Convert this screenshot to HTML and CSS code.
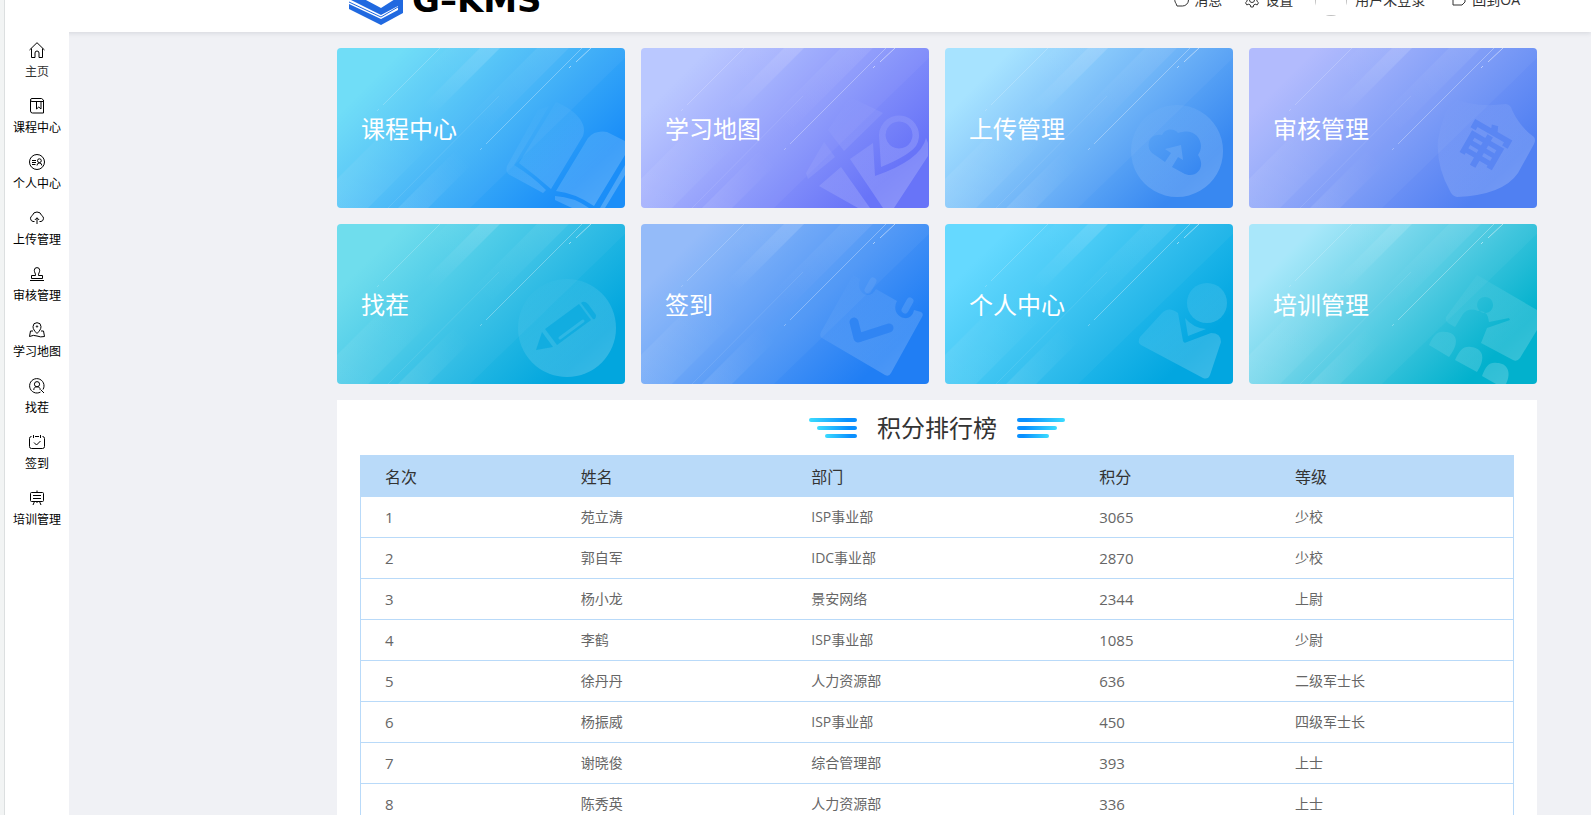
FILE: index.html
```html
<!DOCTYPE html>
<html lang="zh-CN">
<head>
<meta charset="utf-8">
<title>G-KMS</title>
<link rel="stylesheet" href="styles.css">
</head>
<body>
<svg class="defs" width="0" height="0" aria-hidden="true">
  <defs>
    <linearGradient id="up" gradientUnits="userSpaceOnUse" x1="163" y1="0" x2="95" y2="68"><stop offset="0" stop-color="#fff" stop-opacity=".15"/><stop offset="1" stop-color="#fff" stop-opacity="0"/></linearGradient>
    <linearGradient id="up2" gradientUnits="userSpaceOnUse" x1="220" y1="0" x2="140" y2="80"><stop offset="0" stop-color="#fff" stop-opacity=".07"/><stop offset="1" stop-color="#fff" stop-opacity="0"/></linearGradient>
    <linearGradient id="down" gradientUnits="userSpaceOnUse" x1="60" y1="160" x2="120" y2="100"><stop offset="0" stop-color="#fff" stop-opacity=".1"/><stop offset="1" stop-color="#fff" stop-opacity="0"/></linearGradient>
    <linearGradient id="edge" gradientUnits="userSpaceOnUse" x1="0" y1="150" x2="80" y2="70"><stop offset="0" stop-color="#fff" stop-opacity=".08"/><stop offset="1" stop-color="#fff" stop-opacity="0"/></linearGradient>
    <linearGradient id="mark" gradientUnits="userSpaceOnUse" x1="195" y1="60" x2="265" y2="150"><stop offset="0" stop-color="#fff" stop-opacity="0"/><stop offset=".5" stop-color="#fff" stop-opacity=".12"/><stop offset="1" stop-color="#fff" stop-opacity=".21"/></linearGradient>
    <symbol id="rays" viewBox="0 0 288 160">
      <path fill="url(#up)" d="M143 0h20L63 100H43z"/>
      <path fill="url(#up2)" d="M110 0h33L43 100H10zM200 0h32L92 140H60z"/>
      <path fill="url(#edge)" d="M0 131L100 31l31 29L31 160H0z"/>
      <path fill="url(#down)" d="M61 160L161 60h30L91 160zM75 160L175 60h16L91 160z"/>
      <path fill="#fff" fill-opacity=".04" d="M0 0h288v10L133 160H0z"/>
      <g fill="none" stroke="#fff">
        <path stroke-opacity=".2" d="M46 57L103 0M40 63l2-2"/>
        <path stroke-opacity=".1" d="M51 160L162 48"/>
        <path stroke-opacity=".3" d="M149 96L245 0M143 102l2-2"/>
        <path stroke-opacity=".5" d="M239 14L254 0M232 20l2-2"/>
      </g>
    </symbol>
  </defs>
</svg>
<div class="page">
  <header class="header">
    <div class="wrap header-inner">
      <a class="logo" href="#">
        <svg width="56" height="50" viewBox="0 8 56 50" fill="none" aria-hidden="true">
          <path fill="#2069e0" d="M28 2l26 15-26 15L2 17z"/>
          <path fill="#2069e0" d="M1 24l32 17 22-14v19L33 58 1 42v-5l32 15 17-9v-4L33 48 1 32z"/>
          <path stroke="#2069e0" d="M1 35l32 15 17-10M1 29l32 16 18-11"/>
        </svg>
        <span>G–KMS</span>
      </a>
      <nav class="tools">
        <a href="#"><svg width="16" height="16" viewBox="0 0 16 16" aria-hidden="true"><path d="M6.500 2h3a6 6 0 0 1 0 12H4l-1-2.500A6 6 0 0 1 6.500 2z"/></svg>消息</a>
        <a href="#"><svg width="16" height="16" viewBox="0 0 16 16" aria-hidden="true"><circle cx="8" cy="8" r="2.5"/><path d="M6.8 1h2.4l.5 2 1.5.8 2-.7 1.3 2.2-1.6 1.5v2.4l1.6 1.5-1.3 2.2-2-.7-1.5.8-.5 2H6.8l-.5-2-1.5-.8-2 .7-1.3-2.2 1.6-1.5V6.8L1.500 5.300l1.300-2.200 2 .7L6.300 3z"/></svg>设置</a>
        <a class="user" href="#"><span class="avatar"><span></span></span>用户未登录</a>
        <a href="#"><svg width="16" height="16" viewBox="0 0 16 16" aria-hidden="true"><path d="M7 3H2v10h9l3-3V8M9 2h5v5M14 2L8 8"/></svg>回到OA</a>
      </nav>
    </div>
  </header>
  <div class="body">
    <nav class="side">
      <a class="home" href="#"><svg viewBox="0 0 16 16" aria-hidden="true"><path d="M.5 8L8 .7 15.500 8M2.500 6.500v9h3.500v-4.500a2 2 0 0 1 4 0v4.500h3.500v-9"/></svg>主页</a>
      <a href="#"><svg viewBox="0 0 16 16" aria-hidden="true"><path d="M1.500 2.500v10.500a2 2 0 0 0 2 2h11v-11.500h-11.500a1.500 1.500 0 0 1 0-3h9.500l2 1.500v2M7.500 3.500V11L9.800 9l2.200 2V3.500"/></svg>课程中心</a>
      <a href="#"><svg viewBox="0 0 16 16" aria-hidden="true"><circle cx="8" cy="8" r="7.500"/><path d="M3 6.500h4M3 8.500h4M3 10.500h3.500M8 11.500q0-2.500 2.400-2.500t2.400 2.500"/><circle cx="10.400" cy="6.700" r="1.900"/></svg>个人中心</a>
      <a href="#"><svg viewBox="0 0 16 16" aria-hidden="true"><path d="M5.500 11.500H4A3.200 3.200 0 0 1 3.300 5.500 4.900 4.900 0 0 1 12.700 5.500 3.200 3.200 0 0 1 12 11.500h-1.500M8 14V7.800M5.800 10L8 7.800 10.200 10"/></svg>上传管理</a>
      <a href="#"><svg viewBox="0 0 16 16" aria-hidden="true"><path d="M6.500 9.500c.3-2-1.200-3-1.200-5.200a2.700 2.700 0 0 1 5.400 0c0 2.200-1.500 3.200-1.200 5.200h4v3h-11v-3zM1 14.500h14"/></svg>审核管理</a>
      <a href="#"><svg viewBox="0 0 16 16" aria-hidden="true"><path d="M8 11.500C5.500 9 4 7 4 4.700a4 4 0 0 1 8 0C12 7 10.500 9 8 11.500zM4 9H1.500L.5 14.500q4-2 7.500-.5t7.500.5L14.500 9H12"/><circle cx="8" cy="4.500" r=".7"/></svg>学习地图</a>
      <a href="#"><svg viewBox="0 0 16 16" aria-hidden="true"><path d="M11.500 14A7.200 7.200 0 1 1 14 11.500M12 12l3 3M4.800 12c0-2.300 1.200-3.200 3.200-3.200s3.200.9 3.200 3.200"/><circle cx="8" cy="6.200" r="2.600"/></svg>找茬</a>
      <a href="#"><svg viewBox="0 0 16 16" aria-hidden="true"><path d="M2.500 2.500q-2 0-2 2v8q0 2 2 2h11q2 0 2-2v-8q0-2-2-2M6 2.500h4M4.500 1v3M11.500 1v3M5 8.500l2.500 2.500L11.500 7"/></svg>签到</a>
      <a href="#"><svg viewBox="0 0 16 16" aria-hidden="true"><path d="M2.500 2.500h11q1 0 1 1v7q0 1-1 1h-11q-1 0-1-1v-7q0-1 1-1zM8 .5v2M4 5.500h8M4 8.500h8M5.500 11.500L4 15M10.500 11.500l1.500 3.500M8 11.500v1.500"/></svg>培训管理</a>
    </nav>
    <main class="main">
      <div class="wrap">
        <section class="cards">
          <a class="card course" href="#"><svg viewBox="0 0 288 160" aria-hidden="true"><use href="#rays"/><g fill="url(#mark)"><path d="M219 54C238 62 251 75 246 88L214 141Q198 127 182 115z"/><path d="M201 62L170 118Q168 125 173 127L206 145 209 142Q195 128 177 117L212 58z"/><path d="M251 90Q258 82 270 84L288 93V107L257 158Q238 145 219 143zM218 148Q237 149 252 160H235L218 152zM288 117L263 160h5L288 127z"/></g></svg><span>课程中心</span></a>
          <a class="card map" href="#"><svg viewBox="0 0 288 160" aria-hidden="true"><use href="#rays"/><g fill="url(#mark)"><path d="M209 49L242 65 203 103 187 82zM183 94L194 109 167 131 165 125zM200 119L229 160H217L178 138zM232 95L234 128Q280 112 285 90L287 95V108L253 160H242L209 111z"/><path fill-rule="evenodd" d="M240 119L238 87A20 20 0 1 1 275 98Q267 108 240 119zM258 73.500a13.500 13.500 0 1 0 .1 0z"/></g></svg><span>学习地图</span></a>
          <a class="card upload" href="#"><svg viewBox="0 0 288 160" aria-hidden="true"><use href="#rays"/><path fill="url(#mark)" fill-rule="evenodd" d="M232 57a46 46 0 1 0 .1 0zM220 114L207 105C200 98 204 85 217 87 220 80 230 80 233 85 252 78 261 96 253 107 262 120 250 132 238 125L227 119 233 109 238 112 236 97 220 101 226 105z"/></svg><span>上传管理</span></a>
          <a class="card review" href="#"><svg viewBox="0 0 288 160" aria-hidden="true"><use href="#rays"/><path fill="url(#mark)" d="M204 50Q225 60 257 56 262 57 263 62 271 79 285 89 287 92 285 96L269 125Q254 147 208 149 203 148 201 143 187 118 189 92 193 68 204 50z"/><text class="seal" x="235" y="117" text-anchor="middle" transform="rotate(30 235 99)">审</text></svg><span>审核管理</span></a>
          <a class="card find" href="#"><svg viewBox="0 0 288 160" aria-hidden="true"><use href="#rays"/><circle cx="230" cy="104" r="49" fill="url(#mark)"/><path fill="#0aa9df" fill-opacity=".75" d="M199 126L205 108 216 123zM208 105L242 80 254 96 220 121zM244 79Q247 76 251 80L259 91Q259 96 256 95z"/><path stroke="#2eb7e4" stroke-width="3" stroke-linecap="round" d="M223 114L246 97"/></svg><span>找茬</span></a>
          <a class="card sign" href="#"><svg viewBox="0 0 288 160" aria-hidden="true"><use href="#rays"/><path fill="url(#mark)" d="M212 51L219 55C214 68 228 78 235 65L256 77C248 92 270 102 273 86L280 88Q283 90 281 93L250 149Q248 153 244 151L181 114Q178 112 180 108z"/><g fill="none" stroke-linecap="round"><path stroke="#fff" stroke-opacity=".07" stroke-width="7" d="M232 57L227 66"/><path stroke="#fff" stroke-opacity=".12" stroke-width="7" d="M269 77L264 86"/><path stroke="#2d83f3" stroke-opacity=".9" stroke-width="9" stroke-linejoin="round" d="M213 98L217 114 248 104"/></g></svg><span>签到</span></a>
          <a class="card person" href="#"><svg viewBox="0 0 288 160" aria-hidden="true"><use href="#rays"/><g fill="url(#mark)"><circle cx="262" cy="79" r="20"/><path d="M217 89Q224 82 233 89L238 117Q239 120 242 118L266 109Q276 109 276 118L265 151Q263 156 258 154L196 121Q192 118 195 113zM240 94Q248 104 261 105L243 112z"/></g></svg><span>个人中心</span></a>
          <a class="card train" href="#"><svg viewBox="0 0 288 160" aria-hidden="true"><use href="#rays"/><g fill="url(#mark)"><path fill-rule="evenodd" d="M228 51L288 86V106L271 134Q268 138 264 136L232 119 238 104 261 96 260 94 240 98Q239 86 229 87 220 83 214 90L206 103 199 99Q196 97 197 93zM236 73a8 8 0 1 0 .1 0z"/><path d="M180 121L200 133C212 118 207 108 196 108 188 107 185 111 180 121z"/><path d="M206 136L228 148C238 133 233 124 222 123 214 122 211 126 206 136z"/><path d="M233 152L247 160H257C263 148 258 139 248 139 240 138 237 142 233 152z"/></g></svg><span>培训管理</span></a>
        </section>
        <section class="panel">
          <div class="title">
            <div class="bars left"><i></i><i></i><i></i></div>
            <h2>积分排行榜</h2>
            <div class="bars right"><i></i><i></i><i></i></div>
          </div>
          <table class="rank">
            <colgroup><col class="w17"><col class="w20"><col class="w25"><col class="w17"><col class="w21"></colgroup>
            <thead><tr><th>名次</th><th>姓名</th><th>部门</th><th>积分</th><th>等级</th></tr></thead>
            <tbody>
              <tr><td class="num">1</td><td>苑立涛</td><td>ISP事业部</td><td class="num">3065</td><td>少校</td></tr>
              <tr><td class="num">2</td><td>郭自军</td><td>IDC事业部</td><td class="num">2870</td><td>少校</td></tr>
              <tr><td class="num">3</td><td>杨小龙</td><td>景安网络</td><td class="num">2344</td><td>上尉</td></tr>
              <tr><td class="num">4</td><td>李鹤</td><td>ISP事业部</td><td class="num">1085</td><td>少尉</td></tr>
              <tr><td class="num">5</td><td>徐丹丹</td><td>人力资源部</td><td class="num">636</td><td>二级军士长</td></tr>
              <tr><td class="num">6</td><td>杨振威</td><td>ISP事业部</td><td class="num">450</td><td>四级军士长</td></tr>
              <tr><td class="num">7</td><td>谢晓俊</td><td>综合管理部</td><td class="num">393</td><td>上士</td></tr>
              <tr><td class="num">8</td><td>陈秀英</td><td>人力资源部</td><td class="num">336</td><td>上士</td></tr>
            </tbody>
          </table>
        </section>
      </div>
    </main>
  </div>
</div>
</body>
</html>
```

FILE: styles.css
```css
* { box-sizing: border-box; }
body {
  margin: 0;
  font-family: "Open Sans", "Noto Sans CJK SC", sans-serif;
  font-size: 14px;
  color: #333;
  background: #f0f1f5;
}
a { color: inherit; text-decoration: none; }
.defs { position: absolute; }
.page {
  display: flex;
  flex-direction: column;
  height: 100vh;
  overflow: hidden;
  border-left: 4px solid #f2f4f4;
}
.wrap {
  width: 100%;
  max-width: 1200px;
  margin: 0 54px 0 auto;
}
/* The bar is scrolled halfway out of view. */
.header {
  flex: none;
  height: 64px;
  margin-top: -32px;
  border-left: 1px solid #dcdfe0;
  background: #fff;
  box-shadow: 0 1px 5px rgba(0, 21, 41, .12);
}
.header-inner {
  display: flex;
  align-items: center;
  justify-content: space-between;
  height: 64px;
  padding: 0 17px 0 11px;
}
.logo {
  display: flex;
  align-items: center;
  gap: 8px;
  color: #000;
  font: bold 34px/64px "DejaVu Sans", sans-serif;
}
.tools { display: flex; align-items: center; gap: 22px; line-height: 32px; }
.tools a { display: flex; align-items: center; gap: 5px; }
.tools svg, .side svg { fill: none; stroke: currentColor; }
.tools .user { gap: 8px; margin-right: 4px; }
.avatar { width: 32px; height: 32px; border-radius: 50%; overflow: hidden; }
.avatar span { display: block; height: 32px; border: 1px solid #c0c0c0; }

.body { display: flex; flex: 1; min-height: 0; }
.side {
  position: relative;
  display: flex;
  flex-direction: column;
  flex: none;
  width: 65px;
  border-left: 1px solid #dcdfe0;
  background: #fff;
  color: #000;
  font-size: 12px;
  line-height: 16px;
}
.side a {
  display: flex;
  flex-direction: column;
  align-items: center;
  gap: 6px;
  height: 56px;
  padding-top: 10px;
}
.side svg { width: 16px; height: 16px; }
.side .home { color: #333; }
.side .home svg { color: #000; }
.main { flex: 1; padding-top: 16px; }

.cards {
  display: grid;
  grid-template-columns: repeat(4, 1fr);
  gap: 16px;
}
.card {
  display: grid;
  align-items: center;
  height: 160px;
  border-radius: 4px;
  overflow: hidden;
  color: #fff;
  font-size: 24px;
  line-height: 32px;
  background: linear-gradient(135deg, var(--from) 15%, var(--to) 84%);
}
.card svg, .card span { grid-area: 1 / 1; }
.card svg { width: 100%; height: 160px; }
.card span { padding: 2px 24px 0; }
.course { --from: #6bdcf7; --to: #1b8ef8; }
.map { --from: #b8c6ff; --to: #6874f8; }
.upload { --from: #a4e2ff; --to: #3888f1; }
.review { --from: #afb9fd; --to: #5080f2; }
.find { --from: #6adced; --to: #02a6de; }
.sign { --from: #90b9f9; --to: #207ef4; }
.person { --from: #5fd8ff; --to: #02a6e0; }
.train { --from: #a6e7fa; --to: #02b1cd; }
.seal {
  font: bold 50px "Noto Sans CJK SC", sans-serif;
  fill: #5a86f3;
}

.panel { margin-top: 16px; padding: 0 23px; background: #fff; }
.title {
  display: flex;
  align-items: center;
  justify-content: center;
  gap: 20px;
  height: 55px;
}
.title h2 { margin: 0; font-size: 24px; font-weight: 400; line-height: 32px; }
.bars { display: flex; flex-direction: column; gap: 4px; width: 48px; }
.bars i { height: 4px; border-radius: 2px; }
.bars.left { align-items: flex-end; }
.bars.left i { background: linear-gradient(90deg, #3cdcff, #0a90ff 80%); }
.bars.right i { background: linear-gradient(270deg, #3cdcff, #0a90ff 80%); }
.bars i:nth-child(1) { width: 48px; }
.bars i:nth-child(2) { width: 40px; }
.bars i:nth-child(3) { width: 32px; }

.rank {
  width: 100%;
  table-layout: fixed;
  border-spacing: 0;
  border: solid #b9daf9;
  border-width: 0 1px;
  color: #666;
}
.w17 { width: 17%; }
.w20 { width: 20%; }
.w25 { width: 25%; }
.w21 { width: 21%; }
.rank th, .rank td { padding: 0 24px; text-align: left; font-weight: 400; }
.rank th { height: 42px; background: #b9daf9; color: #333; font-size: 16px; }
.rank td { height: 41px; border-bottom: 1px solid #b9daf9; line-height: 20px; }
.rank .num { font-size: 15px; }
```
